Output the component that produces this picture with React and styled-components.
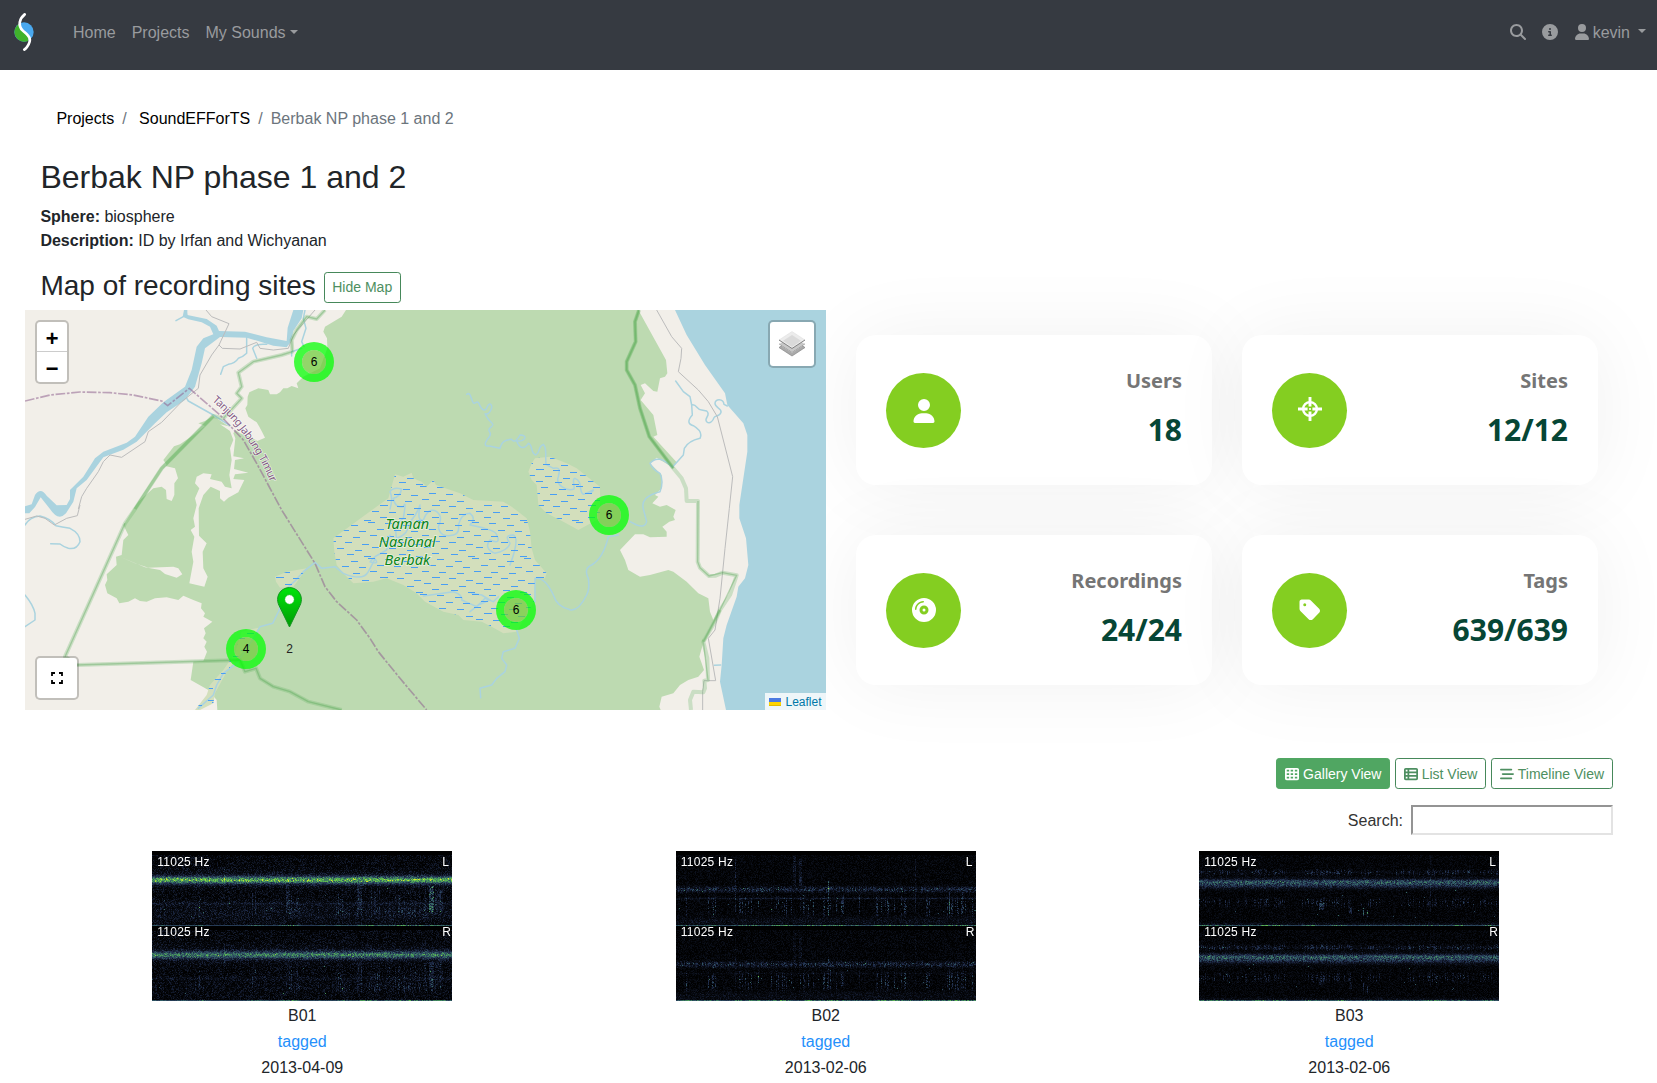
import React, { useEffect, useRef } from "react";
import styled, { createGlobalStyle } from "styled-components";
import {
  FaMagnifyingGlass,
  FaCircleInfo,
  FaUser,
  FaTableCells,
  FaTableList,
  FaBarsStaggered,
  FaCompactDisc,
  FaTag,
} from "react-icons/fa6";

const GlobalStyle = createGlobalStyle`
  *, *::before, *::after { box-sizing: border-box; }
  body {
    margin: 0;
    background: #fff;
    color: #212529;
    font: 16px/24px "Liberation Sans", Arial, sans-serif;
    overflow: hidden;
  }
`;

const Page = styled.div`
  height: 1083px;
  overflow: hidden;
`;

/* ---------- navigation ---------- */
const NavBar = styled.nav`
  display: flex;
  align-items: flex-start;
  height: 70px;
  padding: 12px 11px 0 13px;
  background: #363a41;
`;
const NavGroup = styled.div`
  display: flex;
  gap: 16px;
  margin-left: ${(p) => (p.$right ? "auto" : "38px")};
  padding-top: ${(p) => (p.$right ? 8 : 9)}px;
`;
const NavLink = styled.a`
  display: flex;
  align-items: center;
  height: 24px;
  color: #999b9e;
  svg { display: block; }
`;
const Caret = styled.span`
  margin-left: ${(p) => p.$gap || 4}px;
  margin-bottom: 3px;
  border: 4.8px solid transparent;
  border-top-color: currentColor;
  border-bottom: 0;
`;
const UserName = styled.span`
  margin-left: 3px;
  padding-top: 2px;
`;

/* ---------- heading ---------- */
const Breadcrumb = styled.div`
  display: flex;
  padding: 37px 56px 0 56.4px;
  white-space: pre;
  color: #6c757d;
`;
const Crumb = styled.a`
  color: #000;
`;
const Slash = styled.span`
  padding: 0 8px;
`;
const Intro = styled.header`
  padding: 27px 40px 0 40.4px;
`;
const Title = styled.h1`
  margin: 0 0 9px;
  font-size: 32px;
  font-weight: 400;
  line-height: 38px;
`;
const Fact = styled.div`
  height: 24px;
`;
const MapHeading = styled.div`
  display: flex;
  align-items: center;
  gap: 8px;
  height: 31px;
  margin-top: 19px;
`;
const SubTitle = styled.h2`
  margin: 0;
  padding-bottom: 3px;
  font-size: 28px;
  font-weight: 400;
  line-height: 34px;
`;
const Button = styled.button`
  display: flex;
  align-items: center;
  gap: 4.2px;
  height: 31px;
  padding: ${(p) => (p.$plain ? "0 7.4px" : "1px 7.9px 0")};
  border: 1px solid ${(p) => (p.$active ? "#50a662" : "#46885a")};
  border-radius: 3.2px;
  background: ${(p) => (p.$active ? "#50a662" : "#fff")};
  color: ${(p) => (p.$active ? "#fff" : "#4e8f61")};
  font: 14px/21px "Liberation Sans", Arial, sans-serif;
  white-space: nowrap;
`;

/* ---------- overview ---------- */
const Overview = styled.section`
  display: flex;
  gap: 30px;
  margin-top: 7px;
  padding-left: 25px;
`;
const MapBox = styled.div`
  position: relative;
  width: 801px;
  height: 400px;
  overflow: hidden;
  background: #f2efe9;
  > svg { display: block; }
`;
const Control = styled.div`
  position: absolute;
  left: ${(p) => (p.$right ? "auto" : "10px")};
  right: ${(p) => (p.$right ? "10px" : "auto")};
  top: ${(p) => (p.$bottom ? "auto" : "10px")};
  bottom: ${(p) => (p.$bottom ? "10px" : "auto")};
  display: flex;
  flex-direction: column;
  align-items: center;
  justify-content: center;
  width: ${(p) => p.$w}px;
  height: ${(p) => p.$h}px;
  border: 2px solid rgba(0, 0, 0, 0.2);
  border-radius: 5px;
  background: #fff;
  background-clip: padding-box;
`;
const ZoomKey = styled.span`
  width: 30px;
  height: 30px;
  border-bottom: ${(p) => (p.$line ? "1px solid #ccc" : "0")};
  color: #000;
  font: bold 22px/37px "Liberation Mono", monospace;
  text-align: center;
`;
const Attribution = styled.div`
  position: absolute;
  right: 0;
  bottom: 0;
  display: flex;
  align-items: center;
  gap: 4px;
  height: 17px;
  padding: 1px 4.5px 0;
  background: rgba(255, 255, 255, 0.8);
  color: #0078a8;
  font-size: 12px;
  line-height: 17px;
`;
const Cluster = styled.div`
  position: absolute;
  left: ${(p) => p.$x - 20}px;
  top: ${(p) => p.$y - 20}px;
  width: 40px;
  height: 40px;
  border: 8px solid rgba(0, 255, 0, 0.73);
  border-radius: 50%;
  background: rgba(110, 204, 57, 0.72);
  background-clip: padding-box;
  color: #000;
  font-size: 12px;
  line-height: 24px;
  text-align: center;
`;
const Pin = styled.div`
  position: absolute;
  left: 252px;
  top: 277px;
  width: 25px;
  height: 80px;
  text-align: center;
  font-size: 12px;
  color: #222;
  svg { display: block; }
`;
const PinCount = styled.div`
  margin-top: 9px;
`;

const Stats = styled.div`
  display: grid;
  grid-template-columns: 356px 356px;
  grid-template-rows: 150px 150px;
  gap: 50px 30px;
  padding-top: 25px;
`;
const StatCard = styled.article`
  display: flex;
  align-items: center;
  justify-content: space-between;
  padding: 0 30px;
  border-radius: 20px;
  background: #fff;
  box-shadow: 0 0 80px rgba(0, 0, 0, 0.06);
`;
const StatIcon = styled.div`
  display: grid;
  place-items: center;
  width: 75px;
  height: 75px;
  margin-top: 1px;
  border-radius: 50%;
  background: #84ce21;
  color: #fff;
  svg { margin-top: -${(p) => p.$lift || 0}px; }
`;
const StatText = styled.div`
  padding-bottom: 5px;
  text-align: right;
  font-family: "Noto Sans", sans-serif;
  font-weight: 700;
`;
const StatLabel = styled.div`
  color: #757575;
  font-size: 20px;
  line-height: 30px;
`;
const StatValue = styled.div`
  margin-top: 15px;
  color: #064635;
  font-size: 30px;
  line-height: 38px;
`;

/* ---------- gallery ---------- */
const ViewSwitch = styled.div`
  display: flex;
  justify-content: flex-end;
  gap: 4.3px;
  padding: 48px 44px 0 0;
`;
const SearchRow = styled.label`
  display: flex;
  align-items: center;
  justify-content: flex-end;
  gap: 8px;
  height: 30px;
  margin-top: 16px;
  padding-right: 44px;
  color: #333;
`;
const SearchCaption = styled.span`
  padding-top: 2px;
`;
const SearchInput = styled.input`
  width: 202px;
  height: 30px;
  border: 2px solid;
  border-color: #949494 #e3e3e3 #e3e3e3 #949494;
  background: #fff;
  outline: 0;
`;
const Gallery = styled.section`
  display: grid;
  grid-template-columns: repeat(3, 523.5px);
  padding: 16px 0 0 40.5px;
`;
const Item = styled.article`
  display: flex;
  flex-direction: column;
  align-items: center;
  gap: 2px;
`;
const Spectrum = styled.div`
  position: relative;
  width: 300px;
  height: 150px;
  background: #000;
  margin-bottom: 1px;
  canvas { display: block; }
`;
const Mark = styled.span`
  position: absolute;
  top: ${(p) => p.$y}px;
  left: ${(p) => p.$x}px;
  color: #fff;
  font-size: 12px;
  line-height: 14px;
  letter-spacing: 0.25px;
  white-space: nowrap;
`;
const Tagged = styled.a`
  color: #2490fb;
`;
const Line = styled.div``;

function Logo() {
  return (
    <svg width="22" height="40" viewBox="13 12 22 40">
      <circle cx="24" cy="32" r="9.7" fill="#4aa8ee" />
      <path d="M20.5 22.9 C19 28 22 30 25 33 C28 36 29.5 38 28 40.9 A9.7 9.7 0 1 1 20.5 22.9Z" fill="#40b22b" />
      <path d="M24.7 14.4 C19.5 18.5 17.5 25.5 22.8 30.6 C27.5 35 33.5 38 27 47 Q25.8 48.6 24.3 49.6" fill="none" stroke="#fff" strokeWidth="2.7" strokeLinecap="round" />
    </svg>
  );
}

function SiteIcon({ size }) {
  return (
    <svg width={size} height={size} viewBox="0 0 24 24" fill="none" stroke="currentColor">
      <circle cx="12" cy="12" r="6.9" strokeWidth="2.4" />
      <path d="M12 0V9.6M12 14.4V24M0 12H9.6M14.4 12H24" strokeWidth="2.9" />
      <circle cx="12" cy="12" r="1.1" fill="currentColor" stroke="none" />
    </svg>
  );
}

const FOREST =
  "M978 15 965 35 940 50 915 65 910 80 921 100 922 130 900 190 850 215 830 235 835 250 815 243 802 250 790 250 780 262 770 268 750 268 745 255 715 250 688 262 683 275 682 300 676 310 685 335 710 352 718 365 726 380 735 398 712 408 690 395 660 385 640 370 620 360 580 333 555 348 535 355 555 363 528 385 480 418 462 424 430 465 440 480 420 495 395 530 340 612 310 660 325 690 310 705 305 750 288 755 290 780 260 808 262 825 255 840 262 865 290 880 298 895 325 890 345 880 360 888 380 890 405 880 440 877 475 885 490 872 520 885 545 895 543 910 555 925 550 935 577 950 552 970 557 985 550 1000 560 1010 553 1025 561 1040 550 1068 520 1070 512 1125 565 1155 590 1185 592 1215 1922 1215 1918 1205 1925 1175 1960 1165 1980 1140 2005 1125 2035 1115 2052 1095 2045 1075 2038 1055 2048 1020 2050 1000 2080 945 2070 920 2065 880 2035 865 2000 830 1960 800 1945 795 1890 810 1860 815 1825 795 1815 765 1800 735 1845 688 1870 688 1890 697 1940 695 1940 680 1927 665 1948 650 1965 645 1960 635 1967 615 1940 600 1920 605 1897 595 1915 575 1905 570 1925 550 1925 510 1890 475 1910 458 1957 487 1970 472 1900 395 1912 390 1900 330 1862 285 1875 265 1862 240 1875 235 1900 258 1912 260 1920 220 1935 215 1942 205 1938 165 1855 15Z";
const CLEARINGS = [
  "M600 358 630 378 640 405 630 430 635 465 628 510 635 550 615 545 605 530 570 522 575 508 550 505 530 515 525 535 538 550 525 580 530 600 520 640 525 665 512 675 523 695 515 740 520 770 508 835 553 845 563 815 550 790 548 740 560 715 537 692 536 610 550 570 572 545 600 558 600 580 612 590 625 578 655 562 673 525 640 522 645 508 685 503 642 492 645 465 672 460 640 454 646 400 640 385 650 370Z",
  "M340 612 355 590 400 550 425 545 438 555 440 582 455 588 463 570 463 535 474 520 465 490 436 483 418 495Z",
  "M300 755 345 775 385 788 460 785 475 790 487 808 470 818 435 807 420 795 375 787Z",
];
const SEA =
  "M1965 15 2000 90 2055 180 2115 265 2122 300 2170 355 2182 390 2182 440 2158 600 2158 640 2178 700 2185 780 2175 820 2155 845 2150 875 2120 960 2110 1000 2105 1080 2100 1130 2118 1215H2430V15Z";
const MARSHES = [
  "M940 700 1060 612 1105 580 1125 508 1150 515 1175 503 1180 520 1205 530 1220 545 1240 524 1248 540 1320 565 1360 585 1450 590 1475 605 1520 640 1530 680 1535 730 1545 765 1580 805 1575 820 1545 820 1542 890 1490 980 1450 985 1415 965 1385 950 1330 945 1315 930 1270 920 1215 890 1190 865 1150 840 1100 820 1060 830 1000 835 970 805 950 780 943 740Z",
  "M1545 460 1590 455 1640 475 1670 490 1740 545 1740 640 1675 675 1630 650 1580 625 1555 600 1550 540 1535 525 1525 500 1535 475Z",
  "M765 815 800 800 860 790 835 825 820 845 780 848 768 830Z",
  "M665 980 715 968 690 1020 650 1060 620 1100 585 1165 580 1195 540 1215H525L560 1170 570 1140 610 1095 645 1045Z",
];
const WATERWAYS = [
  "M468 47 490 35M497 15 500 30",
  "M680 90 680 145Q670 155 655 160 645 175 625 178L610 185 602 208",
  "M740 118Q705 115 698 130 702 140 710 160",
  "M855 15 850 40 858 70 845 110 852 125M845 130 815 140V153",
  "M497 275 505 288 580 330 630 362",
  "M15 660Q30 635 60 633 90 640 108 662 125 665 150 670 180 685 180 710 170 735 145 730 130 725 120 717L92 716",
  "M15 870Q40 900 45 925V945L15 965",
  "M1340 268C1350 260 1352 275 1358 290S1370 280 1378 298 1395 322 1402 305 1422 302 1410 320 1390 315 1400 335 1428 355 1412 367 1420 380 1408 395 1388 425 1408 423L1440 430C1446 408 1455 405 1475 403 1482 415 1492 405 1500 390 1525 390 1516 410 1490 408 1498 430 1512 435 1525 415 1540 420 1530 445 1548 450 1563 440 1552 425 1570 418 1582 430 1575 450 1578 478L1600 490C1620 485 1620 495 1615 515 1605 540 1640 560 1662 552 1665 545 1655 520 1665 520 1690 530 1675 560 1690 568 1715 560 1730 545 1712 565 1700 575 1700 590L1705 610",
  "M1967 228 1990 260 2010 275 2015 300 2017 330Q1995 355 2020 362 2050 380 2040 400 2005 408 1993 430L1990 450 1957 487Q1915 445 1890 475 1900 495 1920 505 1932 530 1920 560 1860 575 1870 612L1880 650Q1875 670 1850 660L1830 650",
  "M2015 300C2030 295 2030 315 2045 315L2060 318C2075 330 2050 340 2060 350S2080 345 2082 338 2100 335 2103 322 2085 310 2085 295 2110 280 2112 298L2122 303",
  "M1795 690 1765 695Q1750 760 1715 780 1690 790 1705 820 1710 850 1700 870 1675 920 1650 914 1610 905 1600 870 1575 815 1545 820V890",
  "M1490 975 1498 1000 1485 1030 1450 1040 1445 1060 1460 1080 1455 1100 1430 1120 1415 1140 1380 1150 1382 1178",
  "M778 915 780 900 800 850Q830 825 850 800L885 772 905 790 945 785 970 805Q1030 830 1045 800L1065 762Q1080 780 1050 770L1065 755 1100 735 1110 690",
  "M778 915 768 935 758 955 720 965 700 1000 650 1075 610 1105 590 1140 580 1170 535 1210",
  "M1210 873 1300 860Q1330 870 1325 885L1370 905 1395 880 1420 890 1435 875",
  "M1355 865 1385 870 1410 885 1375 900 1350 920",
  "M1200 605Q1190 650 1210 645 1225 605 1250 620 1270 635 1255 665 1260 700 1300 690 1320 685 1315 660 1325 625 1350 625 1370 640 1350 660 1430 675 1430 690 1445 720 1410 705 1390 730 1425 745 1465 735 1470 715 1450 690 1480 690 1500 700 1470 780 1465 805L1483 850",
  "M1110 612Q1120 580 1110 560 1120 545 1145 552 1140 575 1120 580 1125 610 1150 605 1160 580 1150 640 1120 660 1130 700 1165 690 1170 650 1190 630 1200 600",
  "M2083 1081 2102 1080",
];
const ROADS =
  "M558 15 575 35 627 56 597 120 607 130 660 132 710 112 720 130 760 135 805 130 820 90 850 55 885 15M597 120 575 150 540 210 535 250 485 290 425 352 385 380 375 410 305 457 270 450 250 470 235 500 200 550 185 575 175 612M180 600 172 632 140 640 103 660 75 640 50 633 15 643M1910 15 1955 95 1985 130 1983 160 1975 200 2035 255 2065 290 2092 335 2138 515 2128 610 2115 730 2100 880 2085 975 2065 1000 2087 1127H2052L2048 1160V1215";

function MapCanvas() {
  return (
    <svg width="801" height="400" viewBox="15 15 2403 1200">
      <defs>
        <pattern id="marsh" width="156" height="108" patternUnits="userSpaceOnUse">
          <path
            d="M3 7.5H24M57 13.5H78M108 4.5H129M30 28.5H51M81 31.5H102M135 25.5H156M9 46.5H30M63 49.5H84M114 43.5H135M39 64.5H60M90 70.5H111M0 61.5H12M144 61.5H156M15 82.5H36M69 88.5H90M120 79.5H141M45 100.5H66M96 106.5H117M0 97.5H9M144 97.5H156"
            stroke="#489ef4"
            strokeWidth="3.6"
          />
        </pattern>
        <path id="regency" d="M576 287 Q695 390 755 540" />
      </defs>
      <rect x="15" y="15" width="2403" height="1200" fill="#f2efe9" />
      <path d={FOREST} fill="#bddab1" />
      {CLEARINGS.map((d) => (
        <path key={d} d={d} fill="#f2efe9" />
      ))}
      {MARSHES.map((d) => (
        <path key={d} d={d} fill="#d3dfbc" />
      ))}
      <path d={SEA} fill="#aad3df" />
      <g fill="none" stroke="#aad3df" strokeWidth="4.5" strokeLinejoin="round" strokeLinecap="round">
        {WATERWAYS.map((d) => (
          <path key={d} d={d} />
        ))}
      </g>
      {MARSHES.map((d) => (
        <path key={d} d={d} fill="url(#marsh)" />
      ))}
      <path
        d="M15 604 35 598 45 570Q62 545 80 572L110 601 140 600 150 582 150 555 190 515 225 460 250 440 320 413 345 395 385 335 430 292 495 245 515 195 530 125 550 100 580 88 570 65 545 52 505 43 488 35 492 15H502V30L560 42 590 62 597 78 675 80 740 97 800 108 803 68 820 15H850L845 40 820 78 812 112 800 127 760 122 680 98 600 96 555 130 545 175 525 245 495 285 440 322 405 355 350 410 310 434 250 457 200 525 170 550 160 590 138 625Q115 650 90 612L62 577 45 606 28 625H15Z"
        fill="#aad3df"
      />
      <g fill="none" strokeLinejoin="round">
        <path d={ROADS} stroke="#bcbcbc" strokeWidth="3" />
        <path
          d="M915 15 890 42 860 35 830 75 815 105 817 140 785 150 700 170 655 203 665 245 650 265 665 280 610 340 580 333 425 490 345 612 315 655 135 1055 170 1080 660 1065 675 1100 708 1090 720 1120 760 1145 810 1160 865 1190 965 1215M1857 15 1845 50 1847 110 1820 170V195L1845 240 1860 310 1888 395 1960 490 1985 520 1998 550 2000 588H2034L2033 770 2040 788 2067 813 2087 812 2108 803 2150 811 2130 870 2100 915 2085 950 2050 1010 2062 1060 2064 1125 2053 1127 2055 1150 2050 1162 2020 1160 2010 1185 2013 1215"
          stroke="#60b060"
          strokeOpacity=".27"
          strokeWidth="12"
        />
        <path
          d="M915 15 890 42 860 35 830 75 815 105 817 140 785 150 700 170 655 203 665 245 650 265 665 280 610 340M135 1055 315 655M170 1080 660 1065 675 1100 708 1090 720 1120 760 1145 810 1160 865 1190 965 1215M1857 15 1845 50 1847 110 1820 170V195L1845 240 1860 310 1888 395 1960 490M2034 588 2033 770 2040 788 2067 813 2108 803 2150 811 2100 915 2050 1010 2064 1125"
          stroke="#4ca04c"
          strokeOpacity=".35"
          strokeWidth="4"
        />
        <path
          d="M580 333 425 490 345 612M1857 15 1845 50 1847 110 1820 170V195L1845 240 1860 310 1888 395 1960 490M2100 915 2050 1010"
          stroke="#55ad51"
          strokeOpacity=".35"
          strokeWidth="9"
        />
        <path
          d="M15 288 90 270 180 261 270 263 340 270 425 288 443 302 508 250 600 330 670 405 710 475 785 615 885 775 915 845 950 890 1010 945 1050 1000 1075 1040 1140 1120 1220 1215"
          stroke="#90638f"
          strokeOpacity=".55"
          strokeWidth="5"
          strokeDasharray="29 5 8 5"
        />
      </g>
      <text
        fontFamily="Noto Sans, sans-serif"
        fontSize="32"
        fill="#825882"
        stroke="#fff"
        strokeWidth="4"
        strokeOpacity=".7"
        paintOrder="stroke"
      >
        <textPath href="#regency" textLength="304">Tanjung Jabung Timur</textPath>
      </text>
      <g
        fontFamily="Noto Sans, sans-serif"
        fontStyle="italic"
        fontSize="43.5"
        fill="#0b8519"
        stroke="#fff"
        strokeWidth="4.5"
        strokeOpacity=".55"
        paintOrder="stroke"
        textAnchor="middle"
      >
        <text x="1162" y="672">Taman</text>
        <text x="1162" y="726">Nasional</text>
        <text x="1162" y="780">Berbak</text>
      </g>
    </svg>
  );
}

function LayersIcon() {
  return (
    <svg width="26" height="26" viewBox="0 0 26 26">
      <path d="M0 16.5 13 8 26 16.5 13 25Z" fill="#aaa" stroke="#858585" strokeWidth=".7" />
      <path d="M0 12.8 13 4.3 26 12.8 13 21.3Z" fill="#c8c8c8" stroke="#fff" strokeWidth="1" />
      <path d="M0 12.8 13 21.3 26 12.8" fill="none" stroke="#888" strokeWidth=".8" />
      <path d="M0 9 13 .5 26 9 13 17.5Z" fill="#ececec" stroke="#ddd" strokeWidth=".5" />
      <path d="M4 9.8 13 4 22 9.8 13 16Z" fill="#dadada" />
      <path d="M0 9 13 17.5 26 9" fill="none" stroke="#777" strokeWidth=".9" />
    </svg>
  );
}

function PinIcon() {
  return (
    <svg width="25" height="41" viewBox="0 0 25 41">
      <defs>
        <linearGradient id="pin" x1="0" y1="0" x2="0" y2="1">
          <stop offset="0" stopColor="#00e40a" />
          <stop offset="1" stopColor="#009c05" />
        </linearGradient>
      </defs>
      <path d="M12.5 .6C5.8.6.6 5.8.6 12.5c0 3 1 5.2 2.2 7.5L12.5 40l9.7-20c1.2-2.3 2.2-4.5 2.2-7.5C24.4 5.8 19.2.6 12.5.6Z" fill="url(#pin)" stroke="#149421" strokeWidth="1" />
      <circle cx="12.5" cy="12.5" r="4.9" fill="#fff" stroke="#00c30a" strokeWidth="1" />
    </svg>
  );
}

const CLUSTERS = [
  { x: 289, y: 52, n: 6 },
  { x: 584, y: 205, n: 6 },
  { x: 491, y: 300, n: 6 },
  { x: 221, y: 339, n: 4 },
];

function SiteMap() {
  return (
    <MapBox>
      <MapCanvas />
      {CLUSTERS.map((c) => (
        <Cluster key={c.x} $x={c.x} $y={c.y}>{c.n}</Cluster>
      ))}
      <Pin>
        <PinIcon />
        <PinCount>2</PinCount>
      </Pin>
      <Control $w={34} $h={64}>
        <ZoomKey $line>+</ZoomKey>
        <ZoomKey>−</ZoomKey>
      </Control>
      <Control $right $w={48} $h={48}>
        <LayersIcon />
      </Control>
      <Control $bottom $w={44} $h={44}>
        <svg width="12" height="12" viewBox="0 0 12 12" fill="none" stroke="#000" strokeWidth="1.8">
          <path d="M1 4V1H4M8 1H11V4M11 8V11H8M4 11H1V8" />
        </svg>
      </Control>
      <Attribution>
        <svg width="12" height="8" viewBox="0 0 12 8">
          <path fill="#4c7be1" d="M0 0h12v4H0z" />
          <path fill="#ffd500" d="M0 4h12v3H0z" />
          <path fill="#e0bc00" d="M0 7h12v1H0z" />
        </svg>
        Leaflet
      </Attribution>
    </MapBox>
  );
}

/* ---------- spectrogram ---------- */
function makeRandom(seed) {
  let s = seed;
  return () => {
    s = (s + 0x6d2b79f5) | 0;
    let t = Math.imul(s ^ (s >>> 15), 1 | s);
    t = (t + Math.imul(t ^ (t >>> 7), 61 | t)) ^ t;
    return ((t ^ (t >>> 14)) >>> 0) / 4294967296;
  };
}

const STOPS = [
  [0, 0, 0, 0],
  [0.15, 10, 14, 24],
  [0.35, 33, 46, 78],
  [0.55, 52, 96, 104],
  [0.75, 76, 160, 88],
  [0.9, 110, 200, 75],
  [1, 215, 225, 40],
];
function colour(v) {
  const c = Math.max(0, Math.min(1, v));
  let i = 1;
  while (i < STOPS.length - 1 && c > STOPS[i][0]) i += 1;
  const a = STOPS[i - 1];
  const b = STOPS[i];
  const t = (c - a[0]) / (b[0] - a[0]);
  return [1, 2, 3].map((k) => a[k] + (b[k] - a[k]) * t);
}

/* Bands: [centre, half height, left level, right level, jitter], in rows of one 75px channel. */
function paint(ctx, recording) {
  const image = ctx.createImageData(300, 150);
  for (let ch = 0; ch < 2; ch += 1) {
    const rnd = makeRandom(recording.seed + ch * 91);
    const columns = makeRandom(recording.seed + 7);
    const streak = Array.from({ length: 300 }, () => columns());
    const clump = Array.from({ length: 31 }, () => columns());
    for (let y = 0; y < 75; y += 1) {
      for (let x = 0; x < 300; x += 1) {
        const f = x / 10 - Math.floor(x / 10);
        const density = clump[Math.floor(x / 10)] * (1 - f) + clump[Math.floor(x / 10) + 1] * f;
        const r = rnd();
        let v = y < 4 ? 0 : r * r * recording.floor;
        recording.bands.forEach(([cy, half, left, right, jitter]) => {
          const d = Math.abs(y - cy) / half;
          if (d < 1.5) {
            const level = ch ? right : left;
            v += level * Math.exp(-d * d * 1.3) * (1 - jitter + jitter * 1.4 * rnd());
          }
        });
        recording.streaks.forEach(([from, to, rate, level]) => {
          if (y >= from && y <= to && streak[x] * (0.45 + density) > 1 - rate && rnd() > 0.35) {
            v += level * rnd() * 1.5 * Math.sin(((y - from) / (to - from)) * Math.PI);
          }
        });
        (recording.events || []).forEach(([ex, width, from, to, level]) => {
          if (y >= from && y <= to && Math.abs(x - ex) < width) v += rnd() * level * (ch ? 0.5 : 1);
        });
        if (y > 35 && y < 68 && rnd() > 0.9985) v += 0.45;
        if (y === 74) v = 0.38 + density * 0.55 * rnd();
        const [red, green, blue] = colour(v);
        const p = ((ch * 75 + y) * 300 + x) * 4;
        image.data[p] = red;
        image.data[p + 1] = green;
        image.data[p + 2] = blue;
        image.data[p + 3] = 255;
      }
    }
  }
  ctx.putImageData(image, 0, 0);
}

const RECORDINGS = [
  {
    name: "B01",
    date: "2013-04-09",
    seed: 41,
    floor: 0.25,
    bands: [[28.5, 4, 0.68, 0.5, 0.42], [28, 9, 0.14, 0.12, 0.8], [52, 2, 0.12, 0.08, 0.9], [62, 12, 0.08, 0.02, 0.9]],
    streaks: [[34, 62, 0.15, 0.2], [54, 68, 0.35, 0.2]],
    events: [[279, 3, 35, 60, 0.55], [72, 1, 18, 36, 0.35], [287, 4, 38, 60, 0.2], [207, 3, 34, 58, 0.2], [135, 2, 34, 58, 0.2]],
  },
  {
    name: "B02",
    date: "2013-02-06",
    seed: 137,
    floor: 0.17,
    bands: [[38, 3, 0.17, 0.15, 1], [47, 1, 0.18, 0.07, 0.7], [70, 5, 0.1, 0.08, 0.9]],
    streaks: [[34, 42, 0.7, 0.2], [43, 67, 0.1, 0.32]],
    events: [[59, 1, 8, 60, 0.3], [124, 2, 8, 34, 0.28], [118, 2, 5, 34, 0.22], [152, 1, 30, 64, 0.6], [167, 1, 44, 62, 0.3], [183, 1, 44, 62, 0.35], [200, 1, 45, 64, 0.3], [273, 1, 40, 63, 0.3], [286, 1, 40, 62, 0.35], [239, 1, 8, 60, 0.2]],
  },
  {
    name: "B03",
    date: "2013-02-06",
    seed: 263,
    floor: 0.16,
    bands: [[32, 5, 0.43, 0.45, 0.6], [30, 2, 0.16, 0.16, 1], [21, 2, 0.07, 0.1, 1], [73, 2, 0.12, 0.1, 0.8]],
    streaks: [[17, 25, 0.5, 0.22], [45, 57, 0.4, 0.22]],
    events: [[122, 3, 52, 58, 0.4], [164, 1, 57, 64, 0.7], [168, 1, 59, 66, 0.7], [151, 2, 56, 62, 0.35], [231, 1, 5, 60, 0.2]],
  },
];

function Spectrogram({ recording }) {
  const ref = useRef(null);
  useEffect(() => {
    paint(ref.current.getContext("2d"), recording);
  }, [recording]);
  return (
    <Spectrum>
      <canvas ref={ref} width={300} height={150} />
      <Mark $x={5} $y={4}>11025 Hz</Mark>
      <Mark $x={290} $y={4}>L</Mark>
      <Mark $x={5} $y={74}>11025 Hz</Mark>
      <Mark $x={290} $y={74}>R</Mark>
    </Spectrum>
  );
}

const STATS = [
  { label: "Users", value: "18", icon: FaUser },
  { label: "Sites", value: "12/12", icon: SiteIcon, lift: 3 },
  { label: "Recordings", value: "24/24", icon: FaCompactDisc, lift: 1 },
  { label: "Tags", value: "639/639", icon: FaTag, lift: 1 },
];

export default function App() {
  return (
    <Page>
      <GlobalStyle />
      <NavBar>
        <Logo />
        <NavGroup>
          <NavLink>Home</NavLink>
          <NavLink>Projects</NavLink>
          <NavLink>My Sounds<Caret /></NavLink>
        </NavGroup>
        <NavGroup $right>
          <NavLink><FaMagnifyingGlass size={16} /></NavLink>
          <NavLink><FaCircleInfo size={16} /></NavLink>
          <NavLink>
            <FaUser size={16} viewBox="0 0 448 512" width={14} />
            <UserName>kevin</UserName>
            <Caret $gap={8} />
          </NavLink>
        </NavGroup>
      </NavBar>

      <Breadcrumb>
        <Crumb>Projects</Crumb>
        <Slash>/ </Slash>
        <Crumb>SoundEFForTS</Crumb>
        <Slash>/</Slash>
        <span>Berbak NP phase 1 and 2</span>
      </Breadcrumb>

      <Intro>
        <Title>Berbak NP phase 1 and 2</Title>
        <Fact><b>Sphere:</b> biosphere</Fact>
        <Fact><b>Description:</b> ID by Irfan and Wichyanan</Fact>
        <MapHeading>
          <SubTitle>Map of recording sites</SubTitle>
          <Button $plain>Hide Map</Button>
        </MapHeading>
      </Intro>

      <Overview>
        <SiteMap />
        <Stats>
          {STATS.map(({ label, value, icon: Icon, lift }) => (
            <StatCard key={label}>
              <StatIcon $lift={lift}><Icon size={24} /></StatIcon>
              <StatText>
                <StatLabel>{label}</StatLabel>
                <StatValue>{value}</StatValue>
              </StatText>
            </StatCard>
          ))}
        </Stats>
      </Overview>

      <ViewSwitch>
        <Button $active><FaTableCells size={14} />Gallery View</Button>
        <Button><FaTableList size={14} />List View</Button>
        <Button><FaBarsStaggered size={14} />Timeline View</Button>
      </ViewSwitch>
      <SearchRow>
        <SearchCaption>Search:</SearchCaption>
        <SearchInput />
      </SearchRow>

      <Gallery>
        {RECORDINGS.map((recording) => (
          <Item key={recording.name}>
            <Spectrogram recording={recording} />
            <Line>{recording.name}</Line>
            <Tagged>tagged</Tagged>
            <Line>{recording.date}</Line>
          </Item>
        ))}
      </Gallery>
    </Page>
  );
}
